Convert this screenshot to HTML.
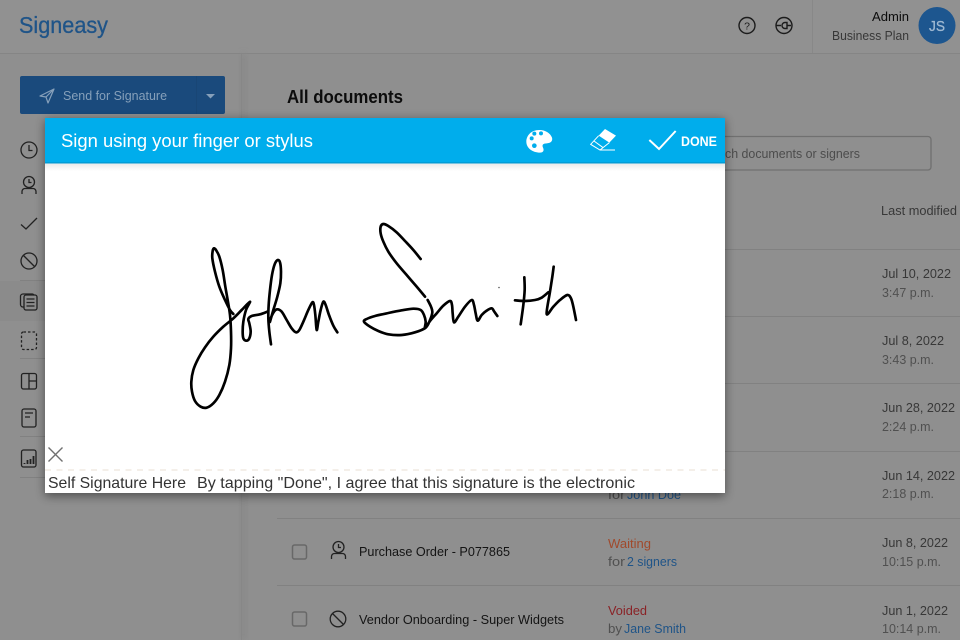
<!DOCTYPE html>
<html><head><meta charset="utf-8"><title>Signeasy</title>
<style>
html,body{margin:0;padding:0;background:#8f8f8f;width:960px;height:640px;overflow:hidden}
svg{display:block;filter:blur(.35px)}
text{font-family:"Liberation Sans",sans-serif}
</style></head><body>
<svg width="960" height="640" viewBox="0 0 960 640" xmlns="http://www.w3.org/2000/svg">
<defs>
<filter id="b" x="-10%" y="-10%" width="120%" height="125%"><feGaussianBlur stdDeviation="5"/></filter>
<filter id="s" x="-50%" y="-50%" width="200%" height="200%"><feGaussianBlur stdDeviation="3"/></filter>
<linearGradient id="g" x1="0" y1="0" x2="0" y2="1"><stop offset="0" stop-color="#e8e8e8"/><stop offset="1" stop-color="#fff"/></linearGradient>
</defs>
<rect width="960" height="640" fill="#8f8f8f"/>
<rect x="0" y="0" width="960" height="53" fill="#919191"/>
<rect x="0" y="53" width="960" height="1" fill="#858585"/>
<rect x="812" y="0" width="1" height="53" fill="#888888"/>
<rect x="241" y="54" width="5" height="586" fill="#888888" filter="url(#s)"/>
<rect x="241" y="54" width="1" height="586" fill="#878787"/>
<rect x="0" y="281" width="241" height="40" fill="#8b8b8b"/>

<text x="19" y="33" font-size="23" fill="#1f5488" stroke="#1f5488" stroke-width=".3" textLength="89" lengthAdjust="spacingAndGlyphs">Signeasy</text>

<g fill="none" stroke="#1c1c1c" stroke-width="1.400">
<circle cx="747" cy="25.500" r="8"/>
<circle cx="784" cy="25.500" r="8"/>
<path d="M776 25.500h5M787 25.500h4M787 22.500h-2a3 3 0 0 0 0 6h2z"/>
</g>
<text x="747" y="29.500" font-size="10.500" fill="#1c1c1c" text-anchor="middle">?</text>
<text x="872" y="21" font-size="13" fill="#0c0c0c" textLength="37" lengthAdjust="spacingAndGlyphs">Admin</text>
<text x="832" y="40" font-size="13" fill="#383838" textLength="77" lengthAdjust="spacingAndGlyphs">Business Plan</text>
<circle cx="937" cy="25.500" r="18.500" fill="#1d568f"/>
<text x="929" y="31" font-size="15" fill="#a0bad3" stroke="#a0bad3" stroke-width=".3" textLength="16" lengthAdjust="spacingAndGlyphs">JS</text>

<rect x="20" y="76" width="205" height="38" rx="2" fill="#1a4a7c"/>
<rect x="196" y="76" width="1" height="38" fill="#194675"/>
<path d="M40 96L54 89L48 103L46 97ZM46 97L54 89" fill="none" stroke="#86a0ba" stroke-width="1.200" stroke-linejoin="round"/>
<text x="63" y="100" font-size="13" fill="#86a0ba" textLength="104" lengthAdjust="spacingAndGlyphs">Send for Signature</text>
<path d="M206 94h9l-4.500 4.500z" fill="#86a0ba"/>

<text x="287" y="103" font-size="18" font-weight="bold" fill="#0c0c0c" textLength="116" lengthAdjust="spacingAndGlyphs">All documents</text>

<rect x="600" y="136.500" width="331" height="33.500" rx="3" fill="none" stroke="#707070" stroke-width="1.300"/>
<text x="725" y="158" font-size="13" fill="#4c4c4c" textLength="135" lengthAdjust="spacingAndGlyphs">ch documents or signers</text>
<text x="881" y="215" font-size="12.500" fill="#383838" textLength="76" lengthAdjust="spacingAndGlyphs">Last modified</text>

<g fill="#818181">
<rect x="277" y="249" width="683" height="1"/><rect x="277" y="316" width="683" height="1"/>
<rect x="277" y="383" width="683" height="1"/><rect x="277" y="451" width="683" height="1"/>
<rect x="277" y="518" width="683" height="1"/><rect x="277" y="585" width="683" height="1"/>
<rect x="20" y="280" width="205" height="1"/><rect x="20" y="358" width="205" height="1"/>
<rect x="20" y="436" width="205" height="1"/><rect x="20" y="477" width="205" height="1"/>
</g>

<g font-size="13" fill="#383838">
<text x="882" y="278" textLength="69" lengthAdjust="spacingAndGlyphs">Jul 10, 2022</text>
<text x="882" y="345" textLength="62" lengthAdjust="spacingAndGlyphs">Jul 8, 2022</text>
<text x="882" y="412" textLength="73" lengthAdjust="spacingAndGlyphs">Jun 28, 2022</text>
<text x="882" y="480" textLength="73" lengthAdjust="spacingAndGlyphs">Jun 14, 2022</text>
<text x="882" y="547" textLength="66" lengthAdjust="spacingAndGlyphs">Jun 8, 2022</text>
<text x="882" y="615" textLength="66" lengthAdjust="spacingAndGlyphs">Jun 1, 2022</text>
</g>
<g font-size="13" fill="#505050">
<text x="882" y="297" textLength="52" lengthAdjust="spacingAndGlyphs">3:47 p.m.</text>
<text x="882" y="364" textLength="52" lengthAdjust="spacingAndGlyphs">3:43 p.m.</text>
<text x="882" y="431" textLength="52" lengthAdjust="spacingAndGlyphs">2:24 p.m.</text>
<text x="882" y="498" textLength="52" lengthAdjust="spacingAndGlyphs">2:18 p.m.</text>
<text x="882" y="566" textLength="59" lengthAdjust="spacingAndGlyphs">10:15 p.m.</text>
<text x="882" y="633" textLength="59" lengthAdjust="spacingAndGlyphs">10:14 p.m.</text>
</g>

<g fill="none" stroke="#686868" stroke-width="1.500">
<rect x="292.500" y="545" width="14" height="14" rx="2"/>
<rect x="292.500" y="612" width="14" height="14" rx="2"/>
</g>
<g fill="none" stroke="#222" stroke-width="1.300">
<circle cx="338.500" cy="547" r="5.500"/><path d="M338.500 544v3.500h2.500M331.500 559v-2.500a3 3 0 0 1 3-3h8a3 3 0 0 1 3 3v2.500"/>
<circle cx="338" cy="619" r="7.800"/><path d="M332.500 613.500l11 11"/>
</g>
<text x="359" y="556" font-size="13" fill="#141414" textLength="151" lengthAdjust="spacingAndGlyphs">Purchase Order - P077865</text>
<text x="359" y="624" font-size="13" fill="#141414" textLength="205" lengthAdjust="spacingAndGlyphs">Vendor Onboarding - Super Widgets</text>
<text x="608" y="499" font-size="13" fill="#505050" textLength="17" lengthAdjust="spacingAndGlyphs">for</text>
<text x="627" y="499" font-size="13" fill="#1f5488" textLength="54" lengthAdjust="spacingAndGlyphs">John Doe</text>
<text x="608" y="548" font-size="13" fill="#a04a2c" textLength="43" lengthAdjust="spacingAndGlyphs">Waiting</text>
<text x="608" y="566" font-size="13" fill="#505050" textLength="17" lengthAdjust="spacingAndGlyphs">for</text>
<text x="627" y="566" font-size="13" fill="#1f5488" textLength="50" lengthAdjust="spacingAndGlyphs">2 signers</text>
<text x="608" y="615" font-size="13" fill="#8a2226" textLength="39" lengthAdjust="spacingAndGlyphs">Voided</text>
<text x="608" y="633" font-size="13" fill="#505050" textLength="14" lengthAdjust="spacingAndGlyphs">by</text>
<text x="624" y="633" font-size="13" fill="#1f5488" textLength="62" lengthAdjust="spacingAndGlyphs">Jane Smith</text>

<g fill="none" stroke="#222" stroke-width="1.300">
<circle cx="29" cy="150" r="8"/><path d="M29 145v5.500h3.500"/>
<circle cx="29" cy="182" r="5.500"/><path d="M29 179v3.500h2.500M22 194v-2.500a3 3 0 0 1 3-3h8a3 3 0 0 1 3 3v2.500"/>
<path d="M21 224.500l5 4.500 11-11"/>
<circle cx="29" cy="261" r="8"/><path d="M23.500 255.500l11 11"/>
<rect x="24" y="295" width="13" height="15" rx="2"/>
<path d="M24 307h-1a2.500 2.500 0 0 1-2.500-2.500v-8a2.500 2.500 0 0 1 2.500-2.500h9a2 2 0 0 1 2 1.500M26.500 299h8M26.500 302.500h8M26.500 306h8"/>
<rect x="21.500" y="332" width="15" height="17.500" rx="2" stroke-dasharray="2.500 2"/>
<rect x="21.500" y="373.500" width="15" height="15.500" rx="2"/><path d="M29 373.500v15.500M29 381h7.500"/>
<rect x="22" y="409" width="14" height="18" rx="2"/><path d="M25 413h8M25 417h5"/>
<rect x="21.500" y="450" width="14.500" height="17" rx="2"/>
<path d="M24.500 464v-1M27.500 464v-4M30.500 464v-5M33.500 464v-8" stroke-width="1.800"/>
</g>

<rect x="45" y="120" width="680" height="376" fill="#000" opacity=".45" filter="url(#b)"/>
<rect x="45" y="118" width="680" height="375" fill="#fff"/>
<rect x="45" y="163" width="680" height="8" fill="url(#g)"/>
<rect x="45" y="118" width="680" height="45" fill="#00adec"/>
<rect x="45" y="162" width="680" height="1.500" fill="#019cd6"/>
<text x="61" y="147" font-size="18.500" fill="#fff" textLength="252" lengthAdjust="spacingAndGlyphs">Sign using your finger or stylus</text>

<g transform="translate(510 115) scale(.33333)">
<path d="M88 45C62 45 49 63 49 80C49 100 68 113 90 113C100 113 103 106 99 98C95 89 100 85 110 85C122 85 129 78 126 68C121 54 106 45 88 45Z" fill="#fff"/>
<circle cx="65" cy="70" r="6" fill="#00adec"/><circle cx="73" cy="56" r="6" fill="#00adec"/><circle cx="93" cy="55" r="6" fill="#00adec"/><circle cx="73" cy="92" r="7" fill="#00adec"/>
<path d="M285 42L318 62L298 83L266 62Z" fill="#fff"/>
<path d="M266 62L242 88L270 105L298 83M252 78L278 97M270 105H315" fill="none" stroke="#fff" stroke-width="3"/>
<path d="M418 75L447 102L497 48" fill="none" stroke="#fff" stroke-width="6"/>
</g>
<text x="681" y="146" font-size="13.500" font-weight="bold" fill="#fff" textLength="36" lengthAdjust="spacingAndGlyphs">DONE</text>

<g class="sig" fill="none" stroke="#000" stroke-width="8" stroke-linecap="round" stroke-linejoin="round" transform="translate(180 215) scale(.33333)">
<polyline points="160,297 150,285 135,255 118,215 105,170 97,130 98,108 102,100 108,105 118,125 128,165 136,215 143,255 150,300 153,350 153,400 148,450 135,500 118,540 100,565 80,578 62,575 45,558 36,530 34,500 40,465 55,430 75,397 100,365 130,335 160,310 185,285 210,260 198,285 190,320 188,350 190,370 198,377 207,372 212,350 208,325 205,312 215,303 240,298 262,290"/>
<polyline points="273,388 268,350 265,310 266,270 270,225 276,180 284,148 293,135 300,142 303,170 301,205 292,245 280,285 270,320 272,310 282,290 292,283 305,290 320,315 335,340 348,352 358,345 370,320 385,285 397,262 402,270 406,300 410,345 415,320 422,285 430,260 437,270 447,300 460,332 472,352"/>
</g>
<g class="sig" fill="none" stroke="#000" stroke-width="8" stroke-linecap="round" stroke-linejoin="round" transform="translate(355 215) scale(.33333)">
<polyline points="197,132 175,105 150,78 125,52 100,33 85,27 77,35 77,55 85,80 100,110 125,145 155,180 185,215 210,245"/>
<polyline points="218,255 228,275 232,292 225,315 212,338 180,352 140,360 100,358 70,348 45,335 27,320 35,312 60,303 100,294 140,286 175,281 197,285 207,300 212,320 210,340 225,318 245,295 265,272 285,258 291,270 293,295 297,322 310,305 330,275 350,255 357,270 362,295 368,317 380,300 395,287 410,280 418,290 427,303"/>
<polyline points="508,187 509,225 505,270 497,328"/>
<polyline points="480,256 510,258 540,255 560,248 580,232"/>
<polyline points="596,155 592,185 585,230 575,297 595,275 615,255 637,240 648,250 655,275 663,315"/>
</g>
<circle cx="499" cy="287.500" r=".8" fill="#555"/>

<path d="M48.500 447.500L62.500 461.500M62.500 447.500L48.500 461.500" stroke="#707070" stroke-width="1.400" fill="none"/>
<path d="M45 470H725" stroke="#e9dfd3" stroke-width="1" stroke-dasharray="6 5.500"/>
<text x="48" y="488" font-size="16" fill="#333" textLength="138" lengthAdjust="spacingAndGlyphs">Self Signature Here</text>
<text x="197" y="488" font-size="16" fill="#333" textLength="438" lengthAdjust="spacingAndGlyphs">By tapping "Done", I agree that this signature is the electronic</text>
</svg>
<script>
document.querySelectorAll('.sig polyline').forEach(function(l){
  var p=l.getAttribute('points').trim().split(/\s+/).map(function(s){return s.split(',').map(Number)});
  var d='M'+p[0][0]+' '+p[0][1];
  for(var i=0;i<p.length-1;i++){
    var a=p[Math.max(i-1,0)],b=p[i],c=p[i+1],e=p[Math.min(i+2,p.length-1)];
    d+='C'+(b[0]+(c[0]-a[0])/6)+' '+(b[1]+(c[1]-a[1])/6)+' '+(c[0]-(e[0]-b[0])/6)+' '+(c[1]-(e[1]-b[1])/6)+' '+c[0]+' '+c[1];
  }
  var n=document.createElementNS('http://www.w3.org/2000/svg','path');
  n.setAttribute('d',d);
  l.parentNode.replaceChild(n,l);
});
</script>
</body></html>
